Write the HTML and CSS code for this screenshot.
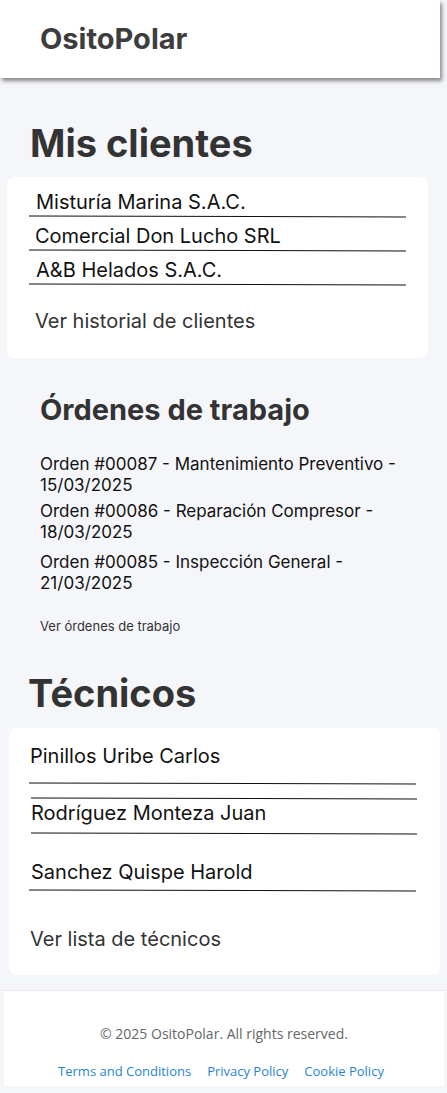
FILE: index.html
```html
<!DOCTYPE html>
<html lang="es">
<head>
<meta charset="utf-8">
<title>OsitoPolar</title>
<link rel="stylesheet" href="styles.css">
</head>
<body>
<header class="topbar">
  <div class="brand">OsitoPolar</div>
</header>
<main class="main">
  <section class="clients">
    <h1 class="title title-clients">Mis clientes</h1>
    <div class="card card-clients">
      <div class="row"><span class="row-text">Misturía Marina S.A.C.</span><div class="rule"></div></div>
      <div class="row"><span class="row-text shift">Comercial Don Lucho SRL</span><div class="rule"></div></div>
      <div class="row"><span class="row-text">A&amp;B Helados S.A.C.</span><div class="rule"></div></div>
      <a class="more more-clients">Ver historial de clientes</a>
    </div>
  </section>

  <section class="orders">
    <h2 class="subtitle">Órdenes de trabajo</h2>
    <ul class="order-list">
      <li>Orden #00087 - Mantenimiento Preventivo - 15/03/2025</li>
      <li>Orden #00086 - Reparación Compresor - 18/03/2025</li>
      <li>Orden #00085 - Inspección General - 21/03/2025</li>
    </ul>
    <a class="small-link">Ver órdenes de trabajo</a>
  </section>

  <section class="techs">
    <h1 class="title title-techs">Técnicos</h1>
    <div class="card card-techs">
      <div class="tech tech-1"><span class="tech-text">Pinillos Uribe Carlos</span><div class="rule"></div></div>
      <div class="tech tech-2"><div class="rule rule-top"></div><span class="tech-text">Rodríguez Monteza Juan</span><div class="rule"></div></div>
      <div class="tech tech-3"><span class="tech-text">Sanchez Quispe Harold</span><div class="rule"></div></div>
      <a class="more more-techs">Ver lista de técnicos</a>
    </div>
  </section>
</main>
<footer class="footer">
  <p class="copy">© 2025 OsitoPolar. All rights reserved.</p>
  <nav class="links">
    <a>Terms and Conditions</a>
    <a>Privacy Policy</a>
    <a>Cookie Policy</a>
  </nav>
</footer>
</body>
</html>
```

FILE: styles.css
```css
* { box-sizing: border-box; }

html, body {
  margin: 0;
  padding: 0;
}

body {
  background: #f5f6fa;
  font-family: Inter, "Noto Sans", sans-serif;
  color: #111;
}

.topbar {
  width: 440px;
  height: 78px;
  background: #fff;
  box-shadow: 2px 3px 4px rgba(0, 0, 0, 0.45);
  display: flex;
  align-items: center;
  padding-left: 40px;
}

.brand {
  font-size: 29px;
  line-height: 36px;
  font-weight: 700;
  color: #3d3d3d;
}

.main {
  display: flex;
  flex-direction: column;
}

.title {
  margin: 0;
  font-size: 38px;
  line-height: 46px;
  font-weight: 700;
  color: #333;
}

.title-clients {
  margin-top: 42px;
  padding-left: 30px;
}

.card {
  background: #fff;
  border-radius: 8px;
}

.card-clients {
  margin: 11px 0 0 7px;
  width: 421px;
  padding: 6px 0 25px;
}

.row {
  display: flex;
  flex-direction: column;
}

.row-text {
  margin-top: 7px;
  padding-left: 29px;
  font-size: 20px;
  line-height: 24px;
  color: #111;
}

.row-text.shift { padding-left: 28px; }

.rule {
  height: 1px;
  background: #111;
  transform: rotate(0.15deg);
}

.row .rule {
  margin: 2px 22px 0 22px;
}

.more {
  display: block;
  font-size: 20px;
  line-height: 24px;
  color: #333;
}

.more-clients {
  margin-top: 24px;
  padding-left: 28px;
}

.orders {
  padding-left: 40px;
  padding-right: 20px;
}

.subtitle {
  margin: 34px 0 0;
  font-size: 29px;
  line-height: 36px;
  font-weight: 700;
  color: #333;
}

.order-list {
  list-style: none;
  margin: 26px 0 0;
  padding: 0;
  display: flex;
  flex-direction: column;
}

.order-list li {
  font-size: 17px;
  line-height: 21px;
  color: #111;
}

.order-list li:nth-child(2) { margin-top: 5px; }
.order-list li:nth-child(3) { margin-top: 9px; }

.small-link {
  display: block;
  margin-top: 24px;
  font-size: 13px;
  line-height: 16px;
  color: #333;
}

.title-techs {
  margin-top: 36px;
  padding-left: 28px;
}

.card-techs {
  margin: 12px 0 0 9px;
  width: 431px;
  padding: 16px 0 24px;
}

.tech {
  display: flex;
  flex-direction: column;
}

.tech-text {
  padding-left: 21px;
  font-size: 20px;
  line-height: 24px;
  color: #111;
}

.tech .rule {
  margin: 0 24px 0 20px;
}

.tech-1 .rule { margin-top: 15px; }

.tech-2 .rule-top { margin: 14px 23px 0 22px; }
.tech-2 .tech-text { margin-top: 2px; padding-left: 22px; }
.tech-2 .rule:last-child { margin: 8px 23px 0 22px; }

.tech-3 .tech-text { margin-top: 26px; padding-left: 22px; }
.tech-3 .rule { margin-top: 6px; }

.more-techs {
  margin-top: 36px;
  padding-left: 21px;
}

.footer {
  margin: 15px 3px 7px 4px;
  background: #fff;
  border-top: 1px solid #ebebeb;
  height: 96px;
  display: flex;
  flex-direction: column;
  align-items: center;
  font-family: "Open Sans", "Noto Sans", sans-serif;
  font-size: 13px;
}

.copy {
  margin: 33px 0 0;
  font-size: 14px;
  line-height: 20px;
  color: #666;
}

.links {
  margin: 18px 0 0 -6px;
  display: flex;
  gap: 16px;
  line-height: 18px;
}

.links a {
  color: #1f84d6;
}
```
